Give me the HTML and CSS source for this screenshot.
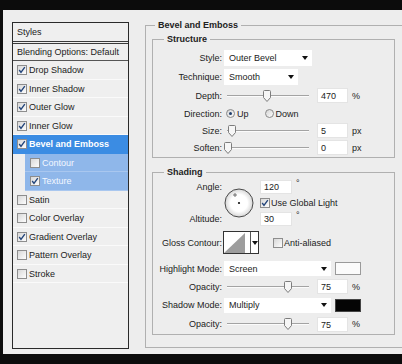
FILE: index.html
```html
<!DOCTYPE html>
<html lang="en">
<head>
    <meta charset="UTF-8">
    <meta name="viewport" content="width=device-width, initial-scale=1.0">
    <title>Layer Style</title>
    <link rel="stylesheet" href="styles.css">
</head>
<body>
    <div class="dialog">
        <div class="styles-list">
            <div class="list-head">Styles</div>
            <div class="list-blend">Blending Options: Default</div>
            <div class="list-item"><span class="cb"><svg viewBox="0 0 8 8"><path d="M1.2 4l1.8 2.4 3.8-5.2"/></svg></span>Drop Shadow</div>
            <div class="list-item"><span class="cb"><svg viewBox="0 0 8 8"><path d="M1.2 4l1.8 2.4 3.8-5.2"/></svg></span>Inner Shadow</div>
            <div class="list-item"><span class="cb"><svg viewBox="0 0 8 8"><path d="M1.2 4l1.8 2.4 3.8-5.2"/></svg></span>Outer Glow</div>
            <div class="list-item"><span class="cb"><svg viewBox="0 0 8 8"><path d="M1.2 4l1.8 2.4 3.8-5.2"/></svg></span>Inner Glow</div>
            <div class="list-item active"><span class="cb"><svg viewBox="0 0 8 8"><path d="M1.2 4l1.8 2.4 3.8-5.2"/></svg></span>Bevel and Emboss</div>
            <div class="list-item sub"><span class="cb"></span>Contour</div>
            <div class="list-item sub"><span class="cb"><svg viewBox="0 0 8 8"><path d="M1.2 4l1.8 2.4 3.8-5.2"/></svg></span>Texture</div>
            <div class="list-item"><span class="cb"></span>Satin</div>
            <div class="list-item"><span class="cb"></span>Color Overlay</div>
            <div class="list-item"><span class="cb"><svg viewBox="0 0 8 8"><path d="M1.2 4l1.8 2.4 3.8-5.2"/></svg></span>Gradient Overlay</div>
            <div class="list-item"><span class="cb"></span>Pattern Overlay</div>
            <div class="list-item"><span class="cb"></span>Stroke</div>
        </div>

        <fieldset class="group outer">
            <legend>Bevel and Emboss</legend>

            <fieldset class="group inner structure">
                <legend>Structure</legend>
                <div class="row h19">
                    <span class="lbl">Style:</span>
                    <div class="select w-style"><span>Outer Bevel</span><span class="arrow"></span></div>
                </div>
                <div class="row h19">
                    <span class="lbl">Technique:</span>
                    <div class="select w-tech"><span>Smooth</span><span class="arrow"></span></div>
                </div>
                <div class="row h19">
                    <span class="lbl">Depth:</span>
                    <div class="slider"><span class="thumb" style="left: 36px"><svg viewBox="0 0 8 12"><path d="M1.5 .5h5a1 1 0 0 1 1 1v6l-3.5 4-3.5-4v-6a1 1 0 0 1 1-1z"/></svg></span></div>
                    <span class="num">470</span><span class="unit">%</span>
                </div>
                <div class="row h17">
                    <span class="lbl">Direction:</span>
                    <span class="radio on"></span><span class="radio-text">Up</span>
                    <span class="radio second"></span><span class="radio-text">Down</span>
                </div>
                <div class="row h17">
                    <span class="lbl">Size:</span>
                    <div class="slider"><span class="thumb" style="left: 1px"><svg viewBox="0 0 8 12"><path d="M1.5 .5h5a1 1 0 0 1 1 1v6l-3.5 4-3.5-4v-6a1 1 0 0 1 1-1z"/></svg></span></div>
                    <span class="num">5</span><span class="unit">px</span>
                </div>
                <div class="row h17">
                    <span class="lbl">Soften:</span>
                    <div class="slider"><span class="thumb" style="left: -3px"><svg viewBox="0 0 8 12"><path d="M1.5 .5h5a1 1 0 0 1 1 1v6l-3.5 4-3.5-4v-6a1 1 0 0 1 1-1z"/></svg></span></div>
                    <span class="num">0</span><span class="unit">px</span>
                </div>
            </fieldset>

            <fieldset class="group inner shading">
                <legend>Shading</legend>
                <div class="angle">
                    <div class="angle-labels">
                        <span class="lbl">Angle:</span>
                        <span class="lbl">Altitude:</span>
                    </div>
                    <svg class="dial" viewBox="0 0 30 30">
                        <defs>
                            <radialGradient id="dialFill" cx="50%" cy="50%" r="50%">
                                <stop offset="0.6" stop-color="#ffffff"/>
                                <stop offset="1" stop-color="#d6d6d6"/>
                            </radialGradient>
                        </defs>
                        <circle cx="15" cy="15" r="14" fill="url(#dialFill)" stroke="#4a4a4a" stroke-width="1"/>
                        <circle cx="15" cy="15" r="1.1" fill="#111"/>
                        <path d="M9 7h4M11 5v4" stroke="#555" stroke-width=".8"/>
                    </svg>
                    <div class="angle-fields">
                        <div class="field-row"><span class="num short">120</span><span class="deg">°</span></div>
                        <div class="field-row"><span class="cb"><svg viewBox="0 0 8 8"><path d="M1.2 4l1.8 2.4 3.8-5.2"/></svg></span><span class="cb-text">Use Global Light</span></div>
                        <div class="field-row"><span class="num short">30</span><span class="deg">°</span></div>
                    </div>
                </div>
                <div class="row h31">
                    <span class="lbl">Gloss Contour:</span>
                    <div class="contour">
                        <svg class="contour-preview" viewBox="0 0 26 21"><rect width="26" height="21" fill="#fff"/><polygon points="0,21 21,1 21,21" fill="#9d9d9d"/></svg>
                        <span class="contour-drop"><span class="arrow"></span></span>
                    </div>
                    <span class="cb anti"></span><span class="cb-text">Anti-aliased</span>
                </div>
                <div class="row h21">
                    <span class="lbl">Highlight Mode:</span>
                    <div class="select w-mode"><span>Screen</span><span class="arrow"></span></div>
                    <span class="swatch light"></span>
                </div>
                <div class="row h15">
                    <span class="lbl">Opacity:</span>
                    <div class="slider"><span class="thumb" style="left: 57px"><svg viewBox="0 0 8 12"><path d="M1.5 .5h5a1 1 0 0 1 1 1v6l-3.5 4-3.5-4v-6a1 1 0 0 1 1-1z"/></svg></span></div>
                    <span class="num">75</span><span class="unit">%</span>
                </div>
                <div class="row h22">
                    <span class="lbl">Shadow Mode:</span>
                    <div class="select w-mode"><span>Multiply</span><span class="arrow"></span></div>
                    <span class="swatch dark"></span>
                </div>
                <div class="row h16">
                    <span class="lbl">Opacity:</span>
                    <div class="slider"><span class="thumb" style="left: 57px"><svg viewBox="0 0 8 12"><path d="M1.5 .5h5a1 1 0 0 1 1 1v6l-3.5 4-3.5-4v-6a1 1 0 0 1 1-1z"/></svg></span></div>
                    <span class="num">75</span><span class="unit">%</span>
                </div>
            </fieldset>
        </fieldset>
    </div>
</body>
</html>
```

FILE: styles.css
```css
body { margin: 0; width: 402px; height: 364px; overflow: hidden; background: #0c0c0c; font-family: "Liberation Sans", Arial, sans-serif; font-size: 9px; color: #222; }
.dialog { display: flex; align-items: flex-start; width: 399px; height: 344px; margin: 10px 0 0 3px; background: #ededed; }

/* styles list on the left */
.styles-list { width: 115px; height: 325px; margin: 12px 0 0 9px; border: 1px solid #2a2a2a; background: #efefef; }
.list-head { height: 18px; line-height: 18px; padding-left: 4px; border-bottom: 3px double #3a3a3a; }
.list-blend { height: 16px; line-height: 16px; padding-left: 4px; border-bottom: 1px solid #555; }
.list-item { display: flex; align-items: center; gap: 2px; height: 18.5px; padding-left: 4px; box-shadow: inset 0 -1px #fafafa; }
.list-item.active { background: #3b8ce3; color: #fff; font-weight: bold; box-shadow: none; }
.list-item.sub { margin-left: 12px; padding-left: 5px; background: #8fb7ea; color: #f4f8ff; box-shadow: inset 0 -1px #a9c7ef; }

.cb { display: inline-flex; align-items: center; justify-content: center; flex: none; width: 10px; height: 10px; box-sizing: border-box; border: 1px solid #8d8d8d; background: linear-gradient(135deg, #d8d8d8, #fdfdfd); }
.cb svg { width: 8px; height: 8px; fill: none; stroke: #23457b; stroke-width: 1.4; }

/* group boxes */
.group { margin: 0; padding: 0; border: 1px solid #b0b0b0; box-sizing: border-box; min-inline-size: 0; }
.group legend { padding: 0 3px; font-weight: bold; line-height: 12px; }
.outer { width: 257px; height: 329px; margin: 9px 0 0 16px; padding: 2px 0 0 6px; border-right: none; }
.outer > legend { margin-left: 3px; }
.inner { width: 243px; }
.inner > legend { margin-left: 11px; }
.structure { padding: 3px 0 1px; }
.shading { margin-top: 8px; padding: 1px 0 2px; }

.row { display: flex; align-items: center; }
.h15 { height: 15px; }
.h16 { height: 16px; }
.h17 { height: 17px; }
.h19 { height: 19px; }
.h21 { height: 21px; }
.h22 { height: 22px; }
.h31 { height: 31px; }
.lbl { flex: none; width: 69px; margin-right: 3px; text-align: right; }

.select { display: flex; align-items: center; justify-content: space-between; height: 16px; margin-left: -1px; padding: 0 4px 0 5px; box-sizing: border-box; background: #fff; }
.w-style { width: 88px; }
.w-tech { width: 74px; }
.w-mode { width: 107px; height: 15px; }
.arrow { width: 0; height: 0; border-left: 3px solid transparent; border-right: 3px solid transparent; border-top: 4px solid #111; }

.slider { position: relative; flex: none; width: 82px; height: 12px; margin-left: 2px; background: linear-gradient(transparent 5px, #a3a3a3 5px, #a3a3a3 6px, #fbfbfb 6px, #fbfbfb 7px, transparent 7px); }
.thumb { position: absolute; top: 0; width: 8px; height: 12px; }
.thumb svg { display: block; width: 8px; height: 12px; fill: #f6f6f6; stroke: #7c7c7c; stroke-width: 1; }

.num { flex: none; width: 31px; height: 15px; margin-left: 8px; padding-left: 3px; box-sizing: border-box; line-height: 14px; background: #fff; border: 1px solid #e4e4e4; }
.num.short { width: 32px; height: 14px; margin-left: 0; line-height: 13px; }
.unit { margin-left: 4px; }
.deg { align-self: flex-start; margin-left: 4px; line-height: 9px; }

.radio { display: flex; align-items: center; justify-content: center; flex: none; width: 9px; height: 9px; margin-left: 1px; box-sizing: border-box; border: 1px solid #8a8a8a; border-radius: 50%; background: linear-gradient(135deg, #d4d4d4, #fdfdfd); }
.radio.on::after { content: ""; width: 3px; height: 3px; border-radius: 50%; background: #1f3d6c; }
.radio.second { margin-left: 16px; }
.radio-text { margin-left: 2px; }

/* angle block */
.angle { display: flex; align-items: center; height: 48px; }
.angle-labels { display: flex; flex-direction: column; justify-content: space-between; height: 48px; }
.angle-labels .lbl { height: 16px; line-height: 16px; }
.dial { flex: none; width: 30px; height: 30px; margin-left: -1px; }
.angle-fields { display: flex; flex-direction: column; margin-left: 6px; }
.field-row { display: flex; align-items: center; height: 16px; }
.cb-text { margin-left: 1px; }

.contour { display: flex; height: 23px; margin-left: -2px; border: 1px solid #333; box-sizing: border-box; background: #fff; }
.contour-preview { width: 26px; height: 21px; }
.contour-drop { display: flex; align-items: center; justify-content: center; width: 7px; border-left: 1px solid #555; }
.cb.anti { margin-left: 14px; }

.swatch { width: 26px; height: 13px; margin-left: 4px; box-sizing: border-box; }
.swatch.light { background: #fbfbfb; border: 1px solid #9a9a9a; }
.swatch.dark { background: #050505; border: 1px solid #444; }
```
